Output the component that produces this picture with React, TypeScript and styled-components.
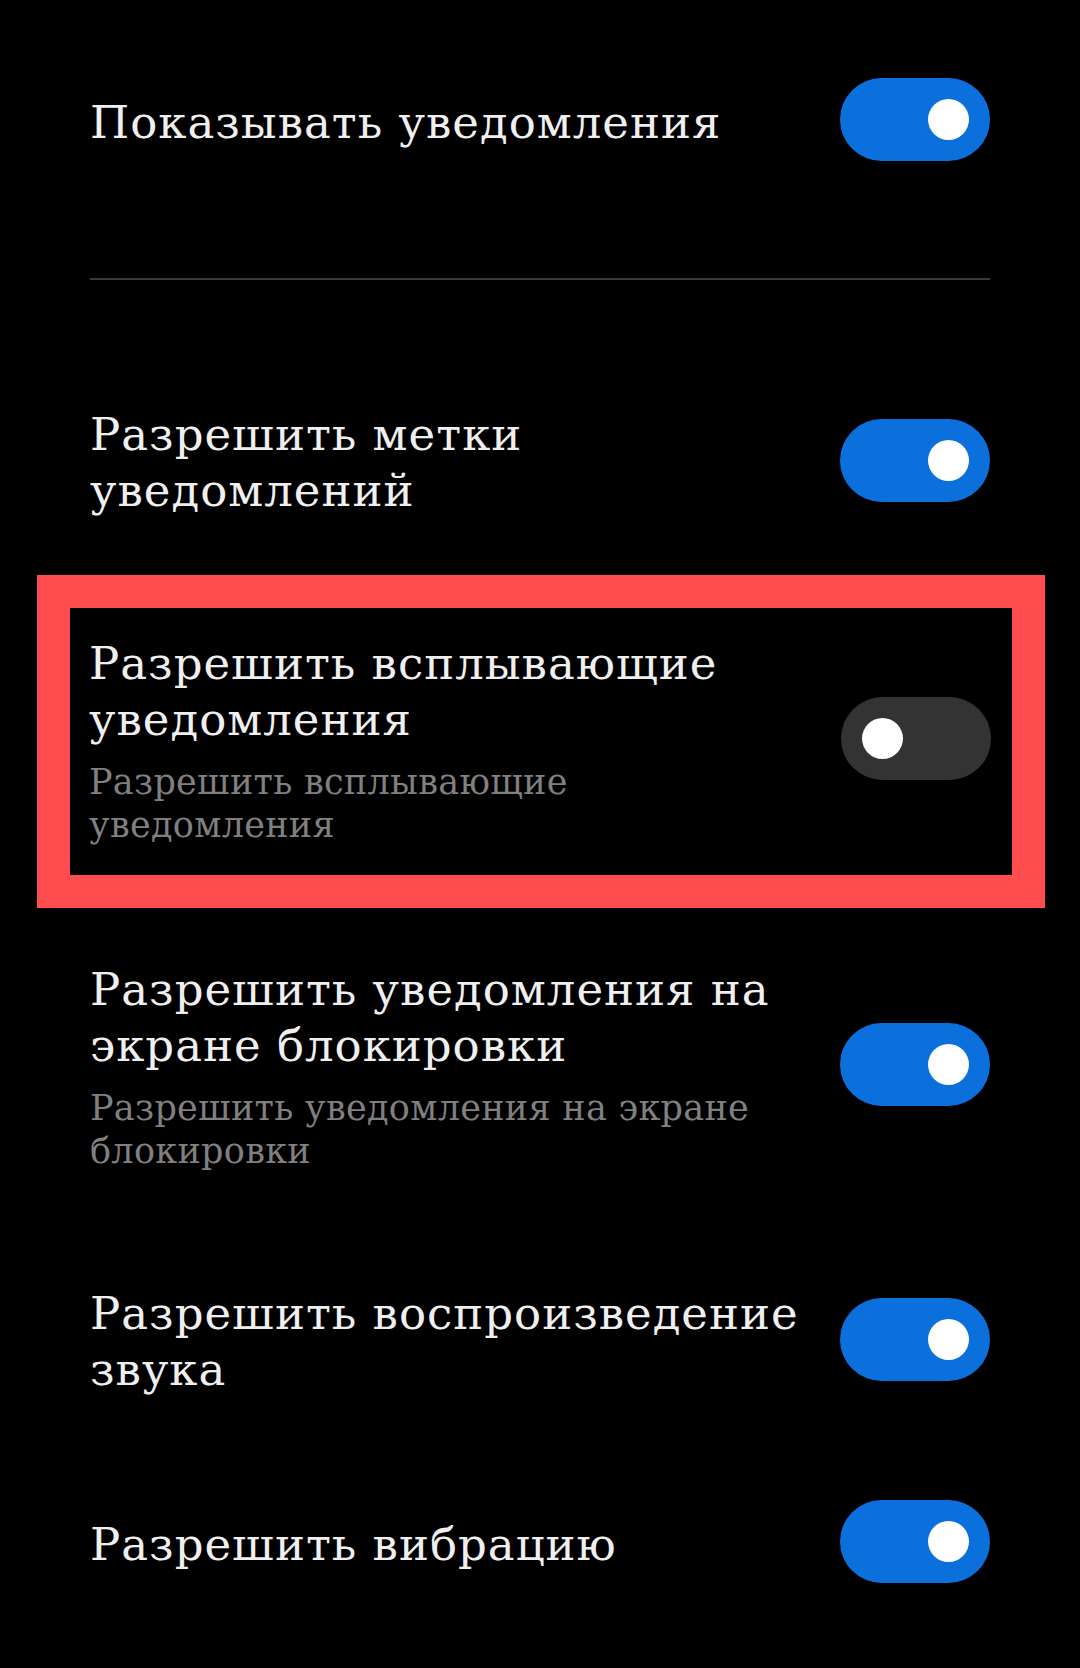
import styled, { createGlobalStyle } from 'styled-components';

const GlobalStyle = createGlobalStyle`
  html, body {
    margin: 0;
    padding: 0;
    background: #000;
  }
  body {
    font-family: "DejaVu Serif", "Liberation Serif", serif;
  }
`;

type Setting = {
  title: string;
  subtitle?: string;
  on: boolean;
  highlighted?: boolean;
  gap: number;
};

const settings: Setting[] = [
  { title: 'Разрешить метки уведомлений', on: true, gap: 93 },
  {
    title: 'Разрешить всплывающие уведомления',
    subtitle: 'Разрешить всплывающие уведомления',
    on: false,
    highlighted: true,
    gap: 28,
  },
  {
    title: 'Разрешить уведомления на экране блокировки',
    subtitle: 'Разрешить уведомления на экране блокировки',
    on: true,
    gap: 20,
  },
  { title: 'Разрешить воспроизведение звука', on: true, gap: 51 },
  { title: 'Разрешить вибрацию', on: true, gap: 46 },
];

export default function App() {
  return (
    <>
      <GlobalStyle />
      <SPage>
        <SRow $gap={50}>
          <STexts>
            <STitle>Показывать уведомления</STitle>
          </STexts>
          <Toggle on />
        </SRow>
        <SDivider />
        {settings.map((s) =>
          s.highlighted ? (
            <SHighlight key={s.title} $gap={s.gap}>
              <SettingRow setting={s} />
            </SHighlight>
          ) : (
            <SettingRow key={s.title} setting={s} />
          ),
        )}
      </SPage>
    </>
  );
}

const SettingRow = ({ setting }: { setting: Setting }) => (
  <SRow $gap={setting.highlighted ? 0 : setting.gap}>
    <STexts>
      <STitle>{setting.title}</STitle>
      {setting.subtitle && <SSubtitle>{setting.subtitle}</SSubtitle>}
    </STexts>
    <Toggle on={setting.on} />
  </SRow>
);

const Toggle = ({ on }: { on: boolean }) => (
  <STrack $on={on}>
    <SKnob $on={on} />
  </STrack>
);

const SPage = styled.div`
  width: 1080px;
  min-height: 1668px;
  box-sizing: border-box;
  padding: 0 90px;
  background: #000;
  display: flex;
  flex-direction: column;
`;

const SRow = styled.div<{ $gap: number }>`
  display: flex;
  align-items: center;
  gap: 34px;
  padding: 28px 0;
  margin-top: ${(p) => p.$gap}px;
`;

const STexts = styled.div`
  flex: 1;
  display: flex;
  flex-direction: column;
  gap: 13px;
  min-width: 0;
  padding-top: 6px;
`;

const STitle = styled.div`
  font-size: 45px;
  line-height: 56px;
  letter-spacing: 1px;
  color: #efefef;
`;

const SSubtitle = styled.div`
  font-size: 35px;
  line-height: 43px;
  letter-spacing: 0.3px;
  color: #808080;
`;

const SDivider = styled.div`
  height: 2px;
  margin-top: 89px;
  background: #3a3a3a;
`;

const SHighlight = styled.div<{ $gap: number }>`
  margin: ${(p) => p.$gap}px -55px 0 -53px;
  border: 33px solid #ff4d4f;
  padding: 0 21px 0 19px;
  & > div {
    padding: 22px 0 28px;
  }
`;

const STrack = styled.div<{ $on: boolean }>`
  position: relative;
  flex: none;
  width: 150px;
  height: 83px;
  border-radius: 42px;
  background: ${(p) => (p.$on ? '#0b6fdc' : '#333333')};
`;

const SKnob = styled.div<{ $on: boolean }>`
  position: absolute;
  top: 21px;
  ${(p) => (p.$on ? 'right: 21px;' : 'left: 21px;')}
  width: 41px;
  height: 41px;
  border-radius: 50%;
  background: #fff;
`;
